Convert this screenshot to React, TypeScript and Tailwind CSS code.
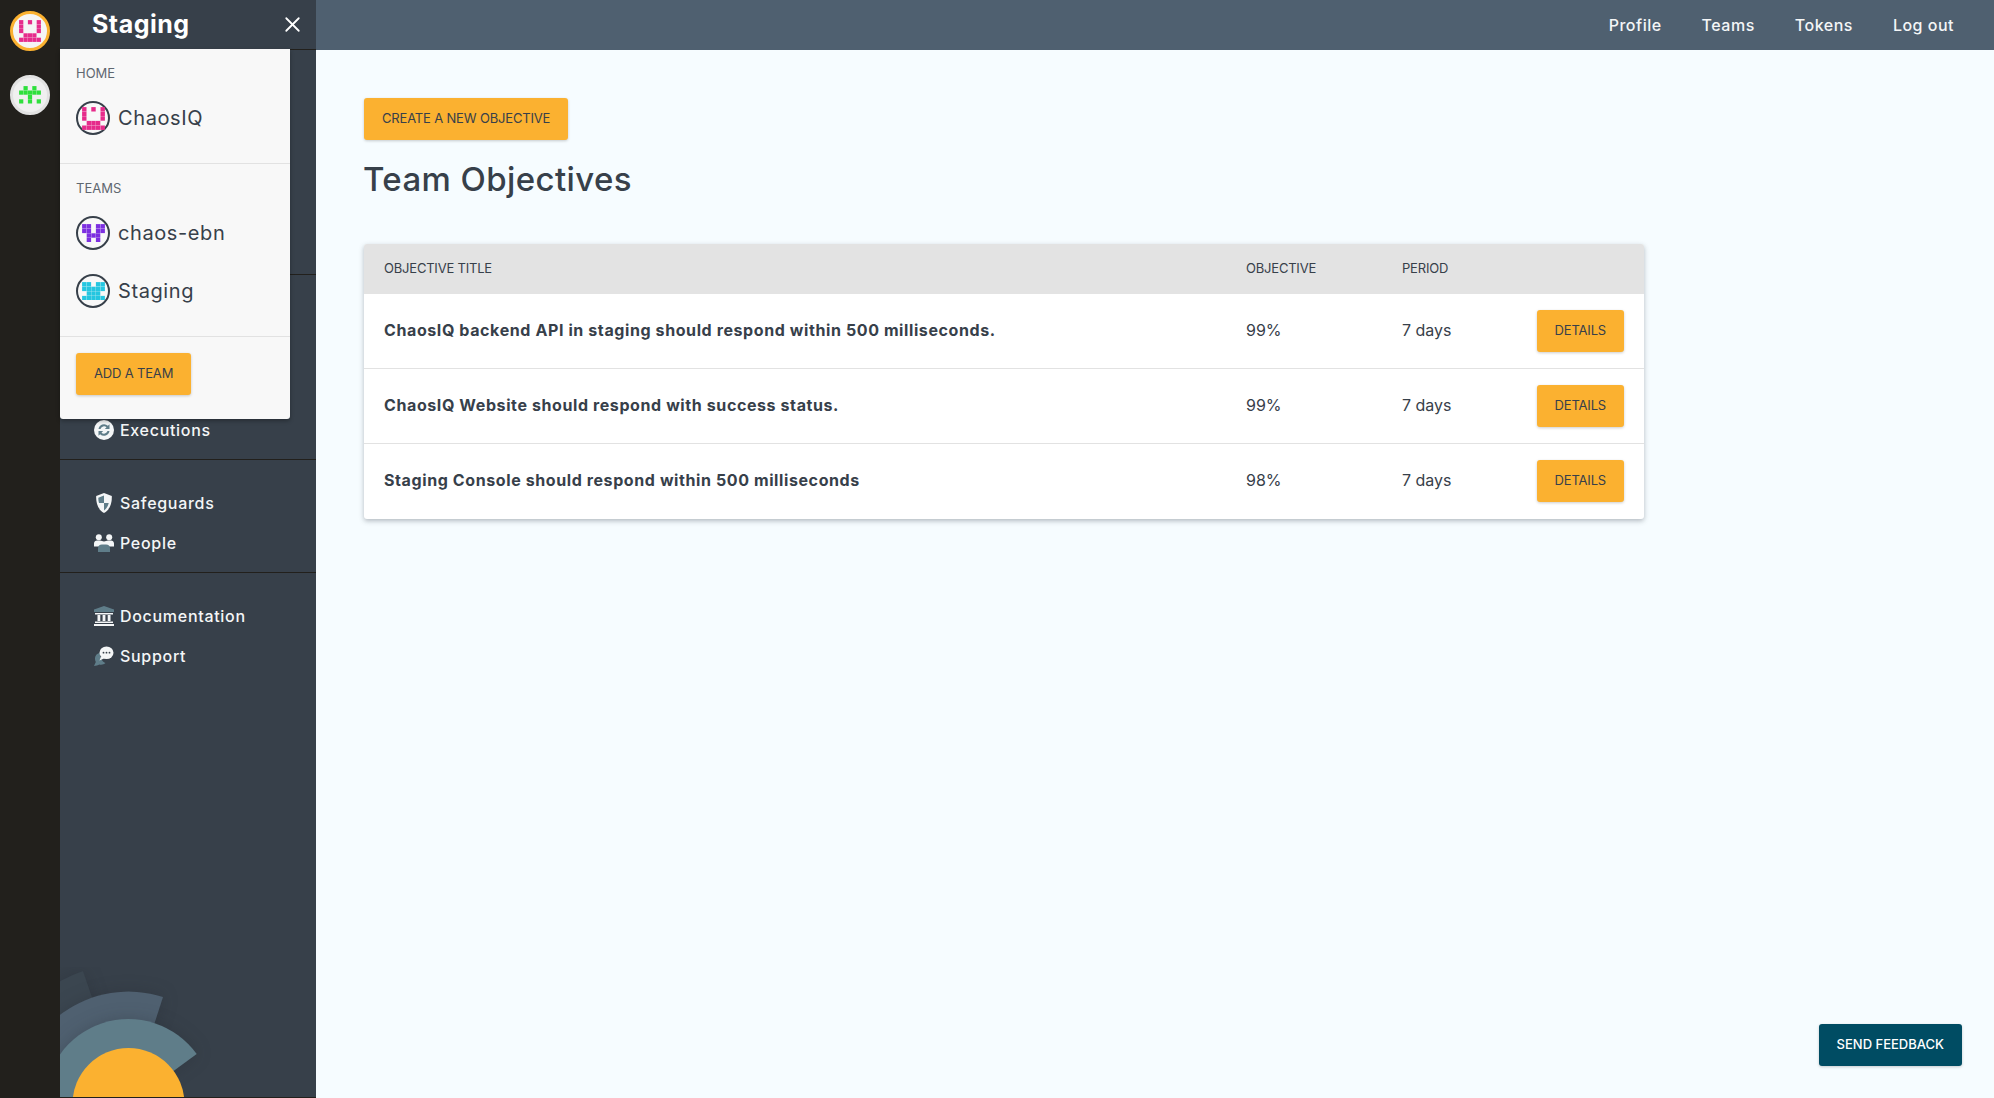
import { X } from "lucide-react";

const font = { fontFamily: "Inter, 'Open Sans', sans-serif" };

const objectives = [
  { title: "ChaosIQ backend API in staging should respond within 500 milliseconds.", target: "99%" },
  { title: "ChaosIQ Website should respond with success status.", target: "99%" },
  { title: "Staging Console should respond within 500 milliseconds", target: "98%" },
];

// identicons, one string per row
const PINK = ["X.X.X", "X...X", "X...X", ".XXX.", "XXXXX"];
const GREEN = [".X.X.", "XXXXX", "..X..", "X.X.X"];
const PURPLE = ["XX.XX", "XX.XX", ".XXX.", ".X.X."];
const CYAN = ["XX.XX", "XXXXX", ".XXX.", "XXXXX"];

function Identicon({ rows, color, size }: { rows: string[]; color: string; size: number }) {
  return (
    <svg width={size} height={(size * rows.length) / 5} viewBox={`0 0 5 ${rows.length}`}>
      {rows.map((row, y) =>
        row.split("").map((c, x) =>
          c === "X" ? <rect key={`${x}-${y}`} x={x + 0.02} y={y + 0.02} width={0.96} height={0.96} fill={color} /> : null
        )
      )}
    </svg>
  );
}

function ExecutionsIcon() {
  return (
    <svg width="20" height="20" viewBox="0 0 20 20">
      <circle cx="10" cy="10" r="10" fill="#f4f6f7" />
      <path d="M4.5 9a5.6 5.6 0 0 1 9.4-3.2L15.500 4.300V9h-4.600l1.600-1.700A3.700 3.700 0 0 0 6.500 9z" fill="#5f7d89" />
      <path d="M15.500 11a5.600 5.600 0 0 1-9.400 3.200L4.500 15.700V11h4.600l-1.600 1.700A3.700 3.700 0 0 0 13.500 11z" fill="#5f7d89" />
    </svg>
  );
}

function ShieldIcon() {
  return (
    <svg width="18" height="20" viewBox="0 0 18 20">
      <path d="M9 0 1.200 3C1 9 2 16 9 20c7-4 8-11 7.800-17z" fill="#f4f6f7" />
      <path d="M9 2.500 3.300 4.700C3.300 6.500 3.500 8.300 4 10h5zM9 10v7.500c2.700-1.800 4-4.800 4.700-7.500z" fill="#5f7d89" />
    </svg>
  );
}

function PeopleIcon() {
  return (
    <svg width="20" height="18" viewBox="0 0 20 18">
      <circle cx="4.800" cy="3.200" r="3" fill="#f4f6f7" />
      <circle cx="15.200" cy="3.200" r="3" fill="#f4f6f7" />
      <path d="M0 12.500V9.500C0 7.500 1.500 6.500 3 6.500h3c1.500 0 2.500 1 4 1s2.500-1 4-1h3c1.500 0 3 1 3 3v3z" fill="#f4f6f7" />
      <path d="M4 18v-3.500C4 12 5.500 10.500 8 10.500h4c2.500 0 4 1.500 4 4V18z" fill="#5f7d89" />
    </svg>
  );
}

function DocsIcon() {
  return (
    <svg width="20" height="20" viewBox="0 0 20 20">
      <path d="M10 0 0 3.500V6h20V3.500z" fill="#5f7d89" />
      <path d="M1 7h18v1.500H1zM0 18h20v2H0zM1 15.500h18V17H1z" fill="#f4f6f7" />
      <path d="M3.500 9h2.800v6H3.500zM8.600 9h2.800v6H8.600zM13.700 9h2.800v6h-2.800z" fill="#f4f6f7" />
    </svg>
  );
}

function SupportIcon() {
  return (
    <svg width="20" height="20" viewBox="0 0 20 20">
      <path d="M6 7C2.500 7.500 1 10 1 13c0 1 .3 2 .8 3L0 20c2 0 4-.8 5.500-1.500 2 .5 4.500 0 6-1.500C8.500 16 6 12 6 7z" fill="#5f7d89" />
      <ellipse cx="12.500" cy="6.700" rx="7" ry="6.300" fill="#f4f6f7" />
      <path d="M7 10.500 5.500 14.500 10 12.500z" fill="#f4f6f7" />
      <circle cx="9.500" cy="6.700" r=".9" fill="#37404a" />
      <circle cx="12.500" cy="6.700" r=".9" fill="#37404a" />
      <circle cx="15.500" cy="6.700" r=".9" fill="#37404a" />
    </svg>
  );
}

function NavItem({ icon, label }: { icon: React.ReactNode; label: string }) {
  return (
    <div className="flex h-10 items-center pl-[34px] text-[16px] font-medium tracking-[0.7px] text-[#f4f6f7]">
      <span className="flex w-5 justify-center">{icon}</span>
      <span className="ml-[6px]">{label}</span>
    </div>
  );
}

function TeamRow({ rows, color, name }: { rows: string[]; color: string; name: string }) {
  return (
    <div className="flex items-center">
      <span className="flex h-[34px] w-[34px] items-center justify-center rounded-full border-2 border-[#37404a]">
        <Identicon rows={rows} color={color} size={23} />
      </span>
      <span className="ml-2 text-[20px] tracking-[0.6px] text-[#37404a]">{name}</span>
    </div>
  );
}

function Button({ label }: { label: string }) {
  return (
    <button className="h-[42px] whitespace-nowrap rounded-[3px] bg-[#fbb130] px-[18px] text-[13px] tracking-[-0.17px] text-[#37404a] shadow-[0_1px_3px_rgba(0,0,0,0.2)]">
      {label}
    </button>
  );
}

function Logo() {
  // wedges share one centre, sitting just below the sidebar's bottom edge
  return (
    <svg className="absolute bottom-0 left-0" width="256" height="130" viewBox="0 0 256 130">
      <path d="M68.500 137 23 4A140 140 0 0 0-71.500 137Z" fill="#3b4650" className="drop-shadow-[0_0_8px_rgba(30,35,45,0.25)]" />
      <path d="M68.500 137 103 30A112 112 0 0 0-43.500 137Z" fill="#4f6070" className="drop-shadow-[0_0_8px_rgba(30,35,45,0.25)]" />
      <path d="M68.500 137 136.700 87A84 84 0 0 0-15.500 137Z" fill="#5f7d89" className="drop-shadow-[0_0_8px_rgba(30,35,45,0.25)]" />
      <circle cx="68.500" cy="137" r="56" fill="#fbb130" />
    </svg>
  );
}

export default function App() {
  return (
    <div className="relative flex h-[1098px] overflow-hidden bg-[#f6fcff]" style={font}>
      {/* team rail */}
      <div className="flex w-[60px] shrink-0 flex-col items-center gap-[24px] bg-[#22201c] pt-[11px]">
        <span className="flex h-10 w-10 items-center justify-center rounded-full border-[3px] border-[#fbb130] bg-[#f5f5f5]">
          <Identicon rows={PINK} color="#e62b8b" size={22} />
        </span>
        <span className="flex h-10 w-10 items-center justify-center rounded-full border-[3px] border-[#e2e2e2] bg-[#f0f0f0]">
          <Identicon rows={GREEN} color="#2ee03c" size={22} />
        </span>
      </div>

      {/* sidebar */}
      <div className="relative flex w-[256px] shrink-0 flex-col border-b border-[#22201c] bg-[#37404a]">
        <div className="flex h-[50px] shrink-0 items-center justify-between border-b border-[#22201c] pl-8 pr-[11px]">
          <span className="text-[25px] font-bold tracking-[0.5px] text-white">Staging</span>
          <X size={25} strokeWidth={1.7} className="text-white" />
        </div>
        <div className="h-[225px] shrink-0 border-b border-[#22201c]" />
        <div className="flex h-[185px] shrink-0 flex-col justify-end border-b border-[#22201c] pb-[9px]">
          <NavItem icon={<ExecutionsIcon />} label="Executions" />
        </div>
        <div className="h-[113px] shrink-0 border-b border-[#22201c] pt-[23px]">
          <NavItem icon={<ShieldIcon />} label="Safeguards" />
          <NavItem icon={<PeopleIcon />} label="People" />
        </div>
        <div className="pt-[23px]">
          <NavItem icon={<DocsIcon />} label="Documentation" />
          <NavItem icon={<SupportIcon />} label="Support" />
        </div>
        <Logo />
      </div>

      {/* team switcher */}
      <div className="absolute left-[60px] top-[49px] w-[230px] rounded-b-[3px] bg-[#f8f8f8] shadow-[0_2px_4px_rgba(0,0,0,0.3)]">
        <div className="h-[115px] border-b border-[#e2e2e2] px-4 pt-[14px]">
          <div className="mb-[18px] text-[13px] leading-[20px] text-[#5f6770]">HOME</div>
          <TeamRow rows={PINK} color="#e62b8b" name="ChaosIQ" />
        </div>
        <div className="h-[173px] border-b border-[#e2e2e2] px-4 pt-[14px]">
          <div className="mb-[18px] text-[13px] leading-[20px] text-[#5f6770]">TEAMS</div>
          <div className="flex flex-col gap-6">
            <TeamRow rows={PURPLE} color="#7c2fe0" name="chaos-ebn" />
            <TeamRow rows={CYAN} color="#25c6e0" name="Staging" />
          </div>
        </div>
        <div className="px-4 pb-6 pt-4">
          <Button label="ADD A TEAM" />
        </div>
      </div>

      {/* main */}
      <div className="flex min-w-0 flex-1 flex-col">
        <div className="flex h-[50px] shrink-0 items-center justify-end gap-10 bg-[#4f6070] pr-10 text-[16px] font-medium tracking-[0.5px] text-[#f4f6f7]">
          <span>Profile</span>
          <span>Teams</span>
          <span>Tokens</span>
          <span>Log out</span>
        </div>
        <div className="flex-1 px-12 pt-12">
          <Button label="CREATE A NEW OBJECTIVE" />
          <h1 className="-ml-px mt-[17px] text-[33px] font-medium leading-[44px] tracking-[0.4px] text-[#37404a]">Team Objectives</h1>
          <div className="mt-[43px] w-[1280px] overflow-hidden rounded-[3px] bg-white text-[#37404a] shadow-[0_2px_5px_rgba(55,64,74,0.35)]">
            <div className="grid h-[50px] grid-cols-[862px_156px_1fr] items-center bg-[#e3e3e3] pl-5 text-[13px] tracking-[-0.2px]">
              <span>OBJECTIVE TITLE</span>
              <span>OBJECTIVE</span>
              <span>PERIOD</span>
            </div>
            {objectives.map((o, i) => (
              <div
                key={o.title}
                className={`grid h-[75px] grid-cols-[862px_156px_1fr_auto] items-center border-b pl-5 pr-5 text-[16px] ${i < 2 ? "border-[#e2e2e2]" : "border-transparent"}`}
              >
                <span className="pb-[2px] font-bold tracking-[0.6px]">{o.title}</span>
                <span className="pb-[2px]">{o.target}</span>
                <span className="pb-[2px]">7 days</span>
                <Button label="DETAILS" />
              </div>
            ))}
          </div>
        </div>
      </div>

      <button className="absolute bottom-[32px] right-[32px] h-[42px] rounded-[3px] bg-[#004c63] px-[18px] text-[13px] font-medium text-white shadow-[0_1px_3px_rgba(0,0,0,0.2)]">
        SEND FEEDBACK
      </button>
    </div>
  );
}
